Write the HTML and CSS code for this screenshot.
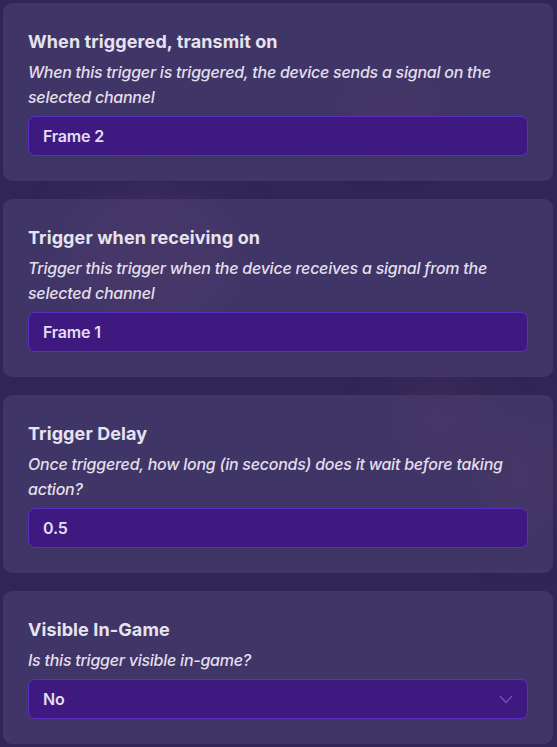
FILE: index.html
```html
<!DOCTYPE html>
<html lang="en">
<head>
<meta charset="utf-8">
<title>Trigger settings</title>
<link rel="stylesheet" href="styles.css">
</head>
<body>
<div class="backdrop">
  <span class="blob blob-a"></span>
  <span class="blob blob-b"></span>
  <span class="blob blob-c"></span>
  <span class="blob blob-d"></span>
</div>
<main class="list">
  <section class="card">
    <h2 class="title">When triggered, transmit on</h2>
    <p class="desc">When this trigger is triggered, the device sends a signal on the selected channel</p>
    <div class="field">Frame 2</div>
  </section>
  <section class="card">
    <h2 class="title">Trigger when receiving on</h2>
    <p class="desc">Trigger this trigger when the device receives a signal from the selected channel</p>
    <div class="field">Frame 1</div>
  </section>
  <section class="card">
    <h2 class="title">Trigger Delay</h2>
    <p class="desc">Once triggered, how long (in seconds) does it wait before taking action?</p>
    <div class="field">0.5</div>
  </section>
  <section class="card">
    <h2 class="title">Visible In-Game</h2>
    <p class="desc">Is this trigger visible in-game?</p>
    <div class="field select">
      <span>No</span>
      <svg class="chev" width="14" height="9" viewBox="0 0 14 9" aria-hidden="true"><path d="M1 1 L7 7.5 L13 1" fill="none" stroke="#7a4fc0" stroke-width="1.2"/></svg>
    </div>
  </section>
</main>
</body>
</html>
```
FILE: styles.css
```css
* { box-sizing: border-box; }
html, body { margin: 0; padding: 0; }
html { overflow: hidden; }
body {
  background: #2f2656;
  font-family: Inter, "Noto Sans", "Liberation Sans", sans-serif;
  width: 557px;
  height: 747px;
  position: relative;
  overflow: hidden;
}
.backdrop {
  position: absolute;
  inset: 0;
  overflow: hidden;
  pointer-events: none;
}
.blob {
  position: absolute;
  border-radius: 50%;
  filter: blur(28px);
}
.blob-a { left: 70px; top: 200px; width: 160px; height: 120px; background: rgba(120, 60, 110, 0.35); }
.blob-b { left: 400px; top: 390px; width: 80px; height: 60px; background: rgba(130, 60, 100, 0.35); }
.blob-c { left: 490px; top: 420px; width: 60px; height: 110px; background: rgba(130, 60, 100, 0.3); }
.blob-d { left: 340px; top: 80px; width: 100px; height: 50px; background: rgba(120, 60, 100, 0.3); }
.list {
  position: relative;
  display: flex;
  flex-direction: column;
  gap: 18.5px;
  padding: 3px 4px 0 3px;
}
.card {
  background: rgba(70, 60, 110, 0.72);
  border-radius: 9px;
  padding: 28px 25px 24.5px;
  display: flex;
  flex-direction: column;
}
.title {
  margin: 0;
  font-size: 18px;
  line-height: 22px;
  font-weight: 700;
  letter-spacing: 0.1px;
  color: #e6e3ef;
}
.desc {
  margin: 7px 0 6px;
  font-size: 16px;
  line-height: 25px;
  font-style: italic;
  font-weight: 500;
  letter-spacing: -0.25px;
  color: #e2dfeb;
}
.field {
  height: 40px;
  border: 1px solid #5a2fc4;
  background: #3e1a80;
  border-radius: 7px;
  padding: 0 14px;
  display: flex;
  align-items: center;
  justify-content: space-between;
  font-size: 16px;
  font-weight: 600;
  letter-spacing: -0.2px;
  color: #e4ddf2;
}
.chev { margin-right: 0; }
```
